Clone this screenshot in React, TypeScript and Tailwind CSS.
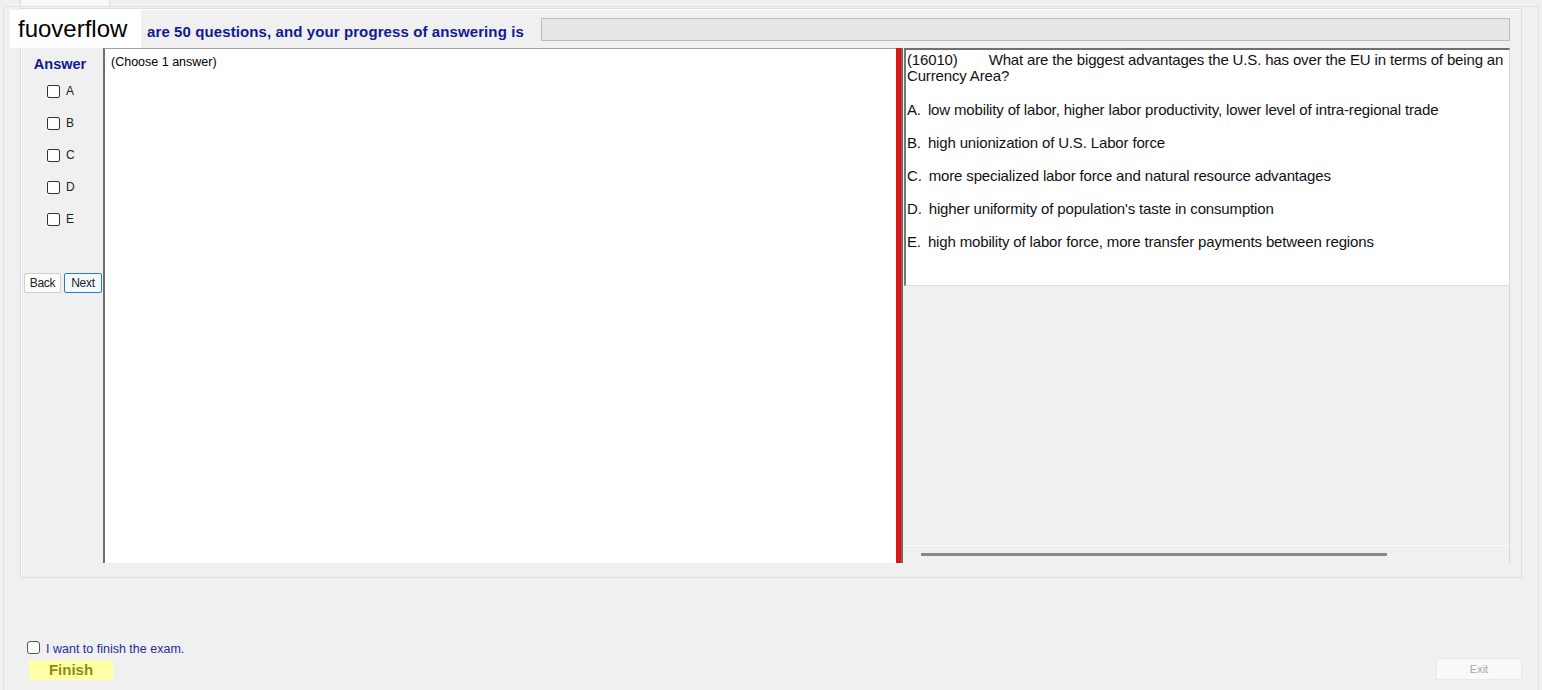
const options = [
  { key: "A", text: "low mobility of labor, higher labor productivity, lower level of intra-regional trade" },
  { key: "B", text: "high unionization of U.S. Labor force" },
  { key: "C", text: "more specialized labor force and natural resource advantages" },
  { key: "D", text: "higher uniformity of population's taste in consumption" },
  { key: "E", text: "high mobility of labor force, more transfer payments between regions" },
];

function Box() {
  return <span className="block h-[13px] w-[13px] rounded-[2px] border border-[#333] bg-white" />;
}

export default function App() {
  return (
    <div
      className="relative h-[690px] w-[1542px] overflow-hidden bg-[#f0f0f0] text-black"
      style={{ fontFamily: '"Liberation Sans", Arial, sans-serif' }}
    >
      {/* tab strip */}
      <div className="flex h-[6px]">
        <div className="ml-[20px] h-full w-[90px] border-x border-[#dcdcdc] bg-[#f8f8f8]" />
      </div>

      <div className="ml-[3px] flex h-[684px] w-[1536px] flex-col border-x border-t border-[#e2e2e2] px-[16px] pt-[1px]">
        {/* group box */}
        <div className="flex h-[570px] w-[1502px] flex-col border border-[#dedede] bg-[#f0f0f0] shadow-[inset_1px_1px_0_#fff]">
          {/* header */}
          <div className="flex h-[39px] items-start">
            <div className="ml-[126px] mt-[15px] whitespace-nowrap text-[15px] font-bold leading-4 tracking-[0.1px] text-[#101a96]">
              are 50 questions, and your progress of answering is
            </div>
            <div className="ml-auto mr-[11px] mt-[9px] h-[23px] w-[969px] border border-[#bcbcbc] bg-[#e6e6e6]" />
          </div>

          {/* body */}
          <div className="flex h-[515px]">
            {/* answer column */}
            <div className="flex w-[82px] flex-col items-center">
              <div className="ml-[-4px] mt-[8px] text-[14.5px] font-bold leading-4 text-[#101a96]">Answer</div>
              <div className="mt-[13px] flex w-full flex-col gap-[19px] pl-[26px]">
                {options.map((o) => (
                  <div key={o.key} className="flex items-center gap-[6px] text-[12px] leading-[13px]">
                    <Box />
                    <span className="text-[#222]">{o.key}</span>
                  </div>
                ))}
              </div>
              <div className="mt-[47px] flex w-full gap-[3px] pl-[3px]">
                <button className="h-[20px] w-[37px] rounded-[2px] border border-[#d0d0d0] bg-[#fdfdfd] text-[12px] tracking-[-0.3px] text-[#222]">
                  Back
                </button>
                <button className="h-[20px] w-[38px] rounded-[2px] border border-[#2a7ac8] bg-[#f6f9fc] text-[12px] tracking-[-0.3px] text-[#222]">
                  Next
                </button>
              </div>
            </div>

            {/* main white area */}
            <div className="w-[793px] border-l-2 border-t border-l-[#6e6e6e] border-t-[#a0a0a0] bg-white pl-[6px] pt-[6px] text-[12.5px] leading-[14px]">
              (Choose 1 answer)
            </div>

            {/* splitter */}
            <div className="flex w-[8px]">
              <div className="w-[5px] bg-[#e01414]" />
              <div className="w-[2px] bg-[#6a6a6a]" />
              <div className="w-[1px] bg-[#f0f0f0]" />
            </div>

            {/* question pane */}
            <div className="flex w-[606px] flex-col border-r border-t-2 border-r-[#d8d8d8] border-t-[#707070]">
              <div className="h-[236px] border-b border-l-2 border-b-[#dcdcdc] border-l-[#777] bg-white pl-[1px] pt-[2px] text-[15px] leading-[16px] tracking-[-0.15px] text-[#111]">
                <p className="whitespace-nowrap">
                  (16010)<span className="inline-block w-[31px]" />What are the biggest advantages the U.S. has over the EU in terms of being an
                  <br />
                  Currency Area?
                </p>
                <div className="pt-[1px]">
                  {options.map((o) => (
                    <p key={o.key} className="mt-[17px]">
                      {o.key}.<span className="inline-block w-[7px]" />
                      {o.text}
                    </p>
                  ))}
                </div>
              </div>
              <div className="flex-1" />
              <div className="flex h-[18px] items-center border-t border-[#fafafa] pl-[17px]">
                <div className="h-[3px] w-[466px] bg-[#888]" />
              </div>
            </div>
          </div>
        </div>

        {/* bottom */}
        <div className="flex flex-1 items-end justify-between pb-[10px] pl-[7px]">
          <div className="flex flex-col">
            <div className="flex items-center gap-[6px] text-[12.5px] text-[#2a2a9c]">
              <span className="mt-[-4px] block h-[13px] w-[13px] rounded-[3px] border border-[#555] bg-white" />
              I want to finish the exam.
            </div>
            <div className="ml-[2px] mt-[1px] flex h-[20px] w-[84px] items-center justify-center bg-[#ffffa6] text-[15px] font-bold text-[#8c8c14]">
              Finish
            </div>
          </div>
          <div className="flex h-[22px] w-[86px] items-center justify-center border border-[#e8e8e8] bg-[#f9f9f9] text-[11px] text-[#a8a8a8]">
            Exit
          </div>
        </div>
      </div>

      {/* watermark */}
      <div className="absolute left-[10px] top-[10px] flex h-[38px] w-[131px] items-center bg-white pl-[8px] text-[24px] text-black">
        fuoverflow
      </div>
    </div>
  );
}
